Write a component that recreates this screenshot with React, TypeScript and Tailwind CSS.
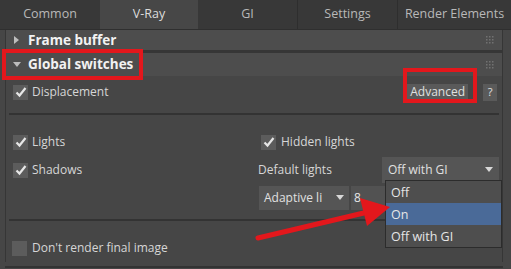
import React from "react";

const Check = ({ on = true }: { on?: boolean }) => (
  <div className="w-[15px] h-[15px] bg-[#5c5c5c] flex items-center justify-center shrink-0">
    {on && (
      <svg width="12" height="12" viewBox="0 0 12 12">
        <path d="M1.5 6.5 L4.5 9.5 L10.5 2" stroke="#e6e6e6" strokeWidth="2.2" fill="none" />
      </svg>
    )}
  </div>
);

const Dots = () => (
  <svg width="8" height="8" viewBox="0 0 8 8" className="opacity-60">
    {[0, 3, 6].map((x) =>
      [0, 3, 6].map((y) => <rect key={`${x}-${y}`} x={x} y={y} width="1.5" height="1.5" fill="#8a8a8a" />)
    )}
  </svg>
);

const Tri = () => (
  <svg width="8" height="6" viewBox="0 0 8 6">
    <path d="M0 0 L8 0 L4 5 Z" fill="#d8d8d8" />
  </svg>
);

export default function App() {
  return (
    <div
      className="relative w-[511px] h-[269px] overflow-hidden bg-[#464646] text-[#d6d6d6] text-[12px]"
      style={{ fontFamily: '"Open Sans", "Noto Sans", sans-serif' }}
    >
      {/* Tabs */}
      <div className="flex h-[29px] bg-[#383838] text-[#b8b8b8] text-[12.5px]">
        <div className="w-[100px] flex items-center justify-center">Common</div>
        <div className="w-[98px] flex items-center justify-center bg-[#474747] text-[#dcdcdc]">V-Ray</div>
        <div className="w-[100px] flex items-center justify-center border-r border-[#2e2e2e]">GI</div>
        <div className="w-[100px] flex items-center justify-center border-r border-[#2e2e2e]">Settings</div>
        <div className="flex-1 flex items-center justify-center">Render Elements</div>
      </div>
      <div className="h-[1px] bg-[#2f2f2f]" />

      <div className="mx-[5px] mr-[8px] border-l border-r border-[#363636]">
        {/* Frame buffer */}
        <div className="h-[20px] flex items-center bg-[#4d4d4d] pl-[8px] pr-[8px]">
          <svg width="6" height="8" viewBox="0 0 6 8">
            <path d="M0 0 L5 4 L0 8 Z" fill="#bdbdbd" />
          </svg>
          <span className="ml-[8px] font-bold text-[13.5px] text-[#f2f2f2]">Frame buffer</span>
          <div className="ml-auto"><Dots /></div>
        </div>
        <div className="h-[3px] bg-[#363636]" />
        {/* Global switches */}
        <div className="h-[23px] flex items-center bg-[#4d4d4d] pl-[7px] pr-[8px]">
          <svg width="8" height="6" viewBox="0 0 8 6">
            <path d="M0 0 L8 0 L4 5 Z" fill="#bdbdbd" />
          </svg>
          <span className="ml-[7px] font-bold text-[13.5px] text-[#f2f2f2]">Global switches</span>
          <div className="ml-auto"><Dots /></div>
        </div>

        {/* Displacement row */}
        <div className="h-[30px] flex items-center pl-[7px] pr-[5px] mt-[1px]">
          <Check />
          <span className="ml-[4px]">Displacement</span>
          <div className="ml-auto h-[17px] px-[3px] bg-[#5a5a5a] flex items-center text-[#e0e0e0] text-[12px]">Advanced</div>
          <div className="ml-[15px] w-[14px] h-[17px] bg-[#5a5a5a] flex items-center justify-center text-[#e0e0e0] text-[11px]">?</div>
        </div>

        <div className="h-[2px] bg-[#333] mt-[6px] mx-[3px]" />

        {/* Lights */}
        <div className="h-[28px] mt-[13px] flex items-center pl-[7px]">
          <div className="w-[248px] flex items-center">
            <Check />
            <span className="ml-[4px]">Lights</span>
          </div>
          <div className="flex items-center">
            <Check />
            <span className="ml-[5px]">Hidden lights</span>
          </div>
        </div>

        {/* Shadows */}
        <div className="h-[28px] flex items-center pl-[7px] pr-[3px]">
          <div className="w-[245px] flex items-center">
            <Check />
            <span className="ml-[4px]">Shadows</span>
          </div>
          <span>Default lights</span>
          <div className="ml-auto w-[117px] h-[26px] bg-[#555] flex items-center px-[6px] text-[#e0e0e0]">
            <span>Off with GI</span>
            <div className="ml-auto"><Tri /></div>
          </div>
        </div>

        {/* Adaptive */}
        <div className="h-[25px] mt-[1px] flex items-center pl-[253px]">
          <div className="w-[90px] h-[24px] bg-[#555] flex items-center px-[5px] text-[#e0e0e0]">
            <span>Adaptive li</span>
            <div className="ml-auto"><Tri /></div>
          </div>
          <div className="ml-[2px] w-[36px] h-[24px] bg-[#525252] flex items-center px-[3px] text-[#e6e6e6]">8</div>
        </div>

        <div className="h-[2px] bg-[#333] mt-[9px] mx-[3px]" />

        {/* Don't render */}
        <div className="h-[28px] mt-[13px] flex items-center pl-[6px]">
          <Check on={false} />
          <span className="ml-[5px]">Don't render final image</span>
        </div>
      </div>
      <div className="absolute left-[5px] right-[8px] bottom-[1px] h-[2px] bg-[#333]" />

      {/* Dropdown list */}
      <div className="absolute left-[385px] top-[180px] w-[117px] h-[68px] bg-[#4e4e4e] border border-[#2c2c2c] text-[#e6e6e6] text-[12.5px] flex flex-col">
        <div className="h-[22px] flex items-center pl-[5px] pt-[3px]">Off</div>
        <div className="h-[22px] flex items-center pl-[5px] pt-[2px] bg-[#4a6a98]">On</div>
        <div className="h-[22px] flex items-center pl-[5px] pt-[3px]">Off with GI</div>
      </div>

      {/* Red highlight boxes */}
      <div className="absolute left-[2px] top-[49px] w-[141px] h-[31px] border-[4px] border-[#e3171c]" />
      <div className="absolute left-[403px] top-[68px] w-[74px] h-[35px] border-[4px] border-[#e3171c]" />

      {/* Red arrow */}
      <svg className="absolute left-0 top-0" width="511" height="269" viewBox="0 0 511 269">
        <path d="M258 238 L368 212" stroke="#e3171c" strokeWidth="5" strokeLinecap="round" />
        <path d="M360 198 L390 207 L367 226 Z" fill="#e3171c" />
      </svg>
    </div>
  );
}
